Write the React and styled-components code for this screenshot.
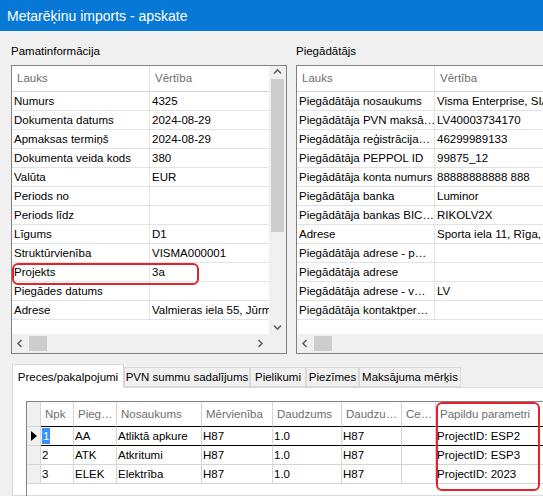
import styled, { createGlobalStyle } from "styled-components";

const GlobalStyle = createGlobalStyle`
  html, body {
    margin: 0;
    padding: 0;
  }
  body {
    background: #f0f0f0;
    font-family: "Liberation Sans", Arial, sans-serif;
    font-size: 11.5px;
    color: #000;
  }
`;

const basicInfo = [
    ["Numurs", "4325"],
    ["Dokumenta datums", "2024-08-29"],
    ["Apmaksas termiņš", "2024-08-29"],
    ["Dokumenta veida kods", "380"],
    ["Valūta", "EUR"],
    ["Periods no", ""],
    ["Periods līdz", ""],
    ["Līgums", "D1"],
    ["Struktūrvienība", "VISMA000001"],
    ["Projekts", "3a"],
    ["Piegādes datums", ""],
    ["Adrese", "Valmieras iela 55, Jūrm"],
];

const supplierInfo = [
    ["Piegādātāja nosaukums", "Visma Enterprise, SIA"],
    ["Piegādātāja PVN maksā…", "LV40003734170"],
    ["Piegādātāja reģistrācija…", "46299989133"],
    ["Piegādātāja PEPPOL ID", "99875_12"],
    ["Piegādātāja konta numurs", "88888888888 888"],
    ["Piegādātāja banka", "Luminor"],
    ["Piegādātāja bankas BIC…", "RIKOLV2X"],
    ["Adrese", "Sporta iela 11, Rīga,"],
    ["Piegādātāja adrese - p…", ""],
    ["Piegādātāja adrese", ""],
    ["Piegādātāja adrese - v…", "LV"],
    ["Piegādātāja kontaktper…", ""],
];

const tabs = [
    { label: "Preces/pakalpojumi", width: 112, active: true },
    { label: "PVN summu sadalījums", width: 126 },
    { label: "Pielikumi", width: 56 },
    { label: "Piezīmes", width: 53 },
    { label: "Maksājuma mērķis", width: 102 },
];

const itemCols = [
    { label: "", width: 14 },
    { label: "Npk", width: 33 },
    { label: "Pieg…", width: 43 },
    { label: "Nosaukums", width: 85 },
    { label: "Mērvienība", width: 71 },
    { label: "Daudzums", width: 69 },
    { label: "Daudzu…", width: 60 },
    { label: "Ce…", width: 34 },
    { label: "Papildu parametri", width: 120 },
];

const items = [
    ["1", "AA", "Atliktā apkure", "H87", "1.0", "H87", "", "ProjectID: ESP2"],
    ["2", "ATK", "Atkritumi", "H87", "1.0", "H87", "", "ProjectID: ESP3"],
    ["3", "ELEK", "Elektrība", "H87", "1.0", "H87", "", "ProjectID: 2023"],
];

const chevrons = {
    up: "M1 5.5 L4.5 2 L8 5.5",
    down: "M1 2.5 L4.5 6 L8 2.5",
    left: "M5.5 1 L2 4.5 L5.5 8",
    right: "M2.5 1 L6 4.5 L2.5 8",
};

function Chevron({ dir }) {
    return (
        <svg width="9" height="9" viewBox="0 0 9 9">
            <path d={chevrons[dir]} fill="none" stroke="#606060" strokeWidth="1.6" />
        </svg>
    );
}

function PropertyGrid({ rows, thumbLeft = 0, highlight }) {
    return (
        <Frame>
            <Cells>
                <PropRow $head>
                    <KeyCell $head>Lauks</KeyCell>
                    <ValueCell $head>Vērtība</ValueCell>
                </PropRow>
                {rows.map(([k, v]) => (
                    <PropRow key={k}>
                        <KeyCell>{k}</KeyCell>
                        <ValueCell>{v}</ValueCell>
                    </PropRow>
                ))}
            </Cells>
            <VBar>
                <VArrow><Chevron dir="up" /></VArrow>
                <VTrack><VThumb /></VTrack>
                <VArrow><Chevron dir="down" /></VArrow>
            </VBar>
            <HBar>
                <HArrow><Chevron dir="left" /></HArrow>
                <HTrack><HThumb $left={thumbLeft} /></HTrack>
                <HArrow><Chevron dir="right" /></HArrow>
            </HBar>
            <Corner />
            {highlight && <Marker $left={0} $top={197} $w={187} $h={22} />}
        </Frame>
    );
}

export default function App() {
    return (
        <Window>
            <GlobalStyle />
            <TitleBar>Metarēķinu imports - apskate</TitleBar>
            <TopArea>
                <Group>
                    <GroupLabel>Pamatinformācija</GroupLabel>
                    <PropertyGrid rows={basicInfo} highlight />
                </Group>
                <Group>
                    <GroupLabel>Piegādātājs</GroupLabel>
                    <PropertyGrid rows={supplierInfo} />
                </Group>
            </TopArea>
            <Lower>
                <TabStrip>
                    {tabs.map((t) => (
                        <Tab key={t.label} $w={t.width} $active={t.active}>{t.label}</Tab>
                    ))}
                </TabStrip>
                <Panel>
                    <ItemsGrid>
                        <ItemRow $head>
                            {itemCols.map((c, i) => (
                                <ItemCell key={i} $w={c.width} $head $rowHead={i === 0}>{c.label}</ItemCell>
                            ))}
                        </ItemRow>
                        {items.map((row, r) => (
                            <ItemRow key={row[0]}>
                                <ItemCell $w={itemCols[0].width} $rowHead>
                                    {r === 0 && (
                                        <svg width="6" height="10" viewBox="0 0 6 10">
                                            <path d="M0 0 L6 5 L0 10 Z" fill="#000" />
                                        </svg>
                                    )}
                                </ItemCell>
                                {row.map((v, c) => (
                                    <ItemCell key={c} $w={itemCols[c + 1].width} $active={r === 0}>
                                        {r === 0 && c === 0 ? <Selected>{v}</Selected> : v}
                                    </ItemCell>
                                ))}
                            </ItemRow>
                        ))}
                        <Marker $left={409} $top={0} $w={104} $h={89} />
                    </ItemsGrid>
                </Panel>
            </Lower>
        </Window>
    );
}

const Window = styled.div`
    width: 543px;
    height: 496px;
    overflow: hidden;
    display: flex;
    flex-direction: column;
    background: #f0f0f0;
`;

const TitleBar = styled.div`
    flex: none;
    height: 31px;
    display: flex;
    align-items: center;
    padding-left: 7px;
    background: #0878d6;
    color: #fff;
    font-size: 14px;
`;

const TopArea = styled.div`
    flex: none;
    display: flex;
    gap: 9px;
    padding: 13px 0 0 11px;
`;

const Group = styled.div`
    flex: none;
    display: flex;
    flex-direction: column;
    width: 276px;
`;

const GroupLabel = styled.div`
    height: 14px;
    line-height: 14px;
    margin-bottom: 7px;
`;

const Frame = styled.div`
    position: relative;
    box-sizing: border-box;
    width: 276px;
    height: 289px;
    border: 1px solid #828282;
    background: #fff;
    display: grid;
    grid-template-columns: 1fr 17px;
    grid-template-rows: 1fr 19px;
`;

const Cells = styled.div`
    overflow: hidden;
    min-width: 0;
`;

const PropRow = styled.div`
    display: flex;
    box-sizing: border-box;
    height: ${(p) => (p.$head ? 26 : 19)}px;
    border-bottom: 1px solid ${(p) => (p.$head ? "#d5d5d5" : "#e3e3e3")};
`;

const KeyCell = styled.div`
    flex: none;
    box-sizing: border-box;
    width: 138px;
    border-right: 1px solid #e3e3e3;
    padding-left: ${(p) => (p.$head ? 5 : 2)}px;
    line-height: ${(p) => (p.$head ? 25 : 18)}px;
    color: ${(p) => (p.$head ? "#6d6d6d" : "#000")};
    white-space: nowrap;
    overflow: hidden;
`;

const ValueCell = styled(KeyCell)`
    flex: 1;
    width: auto;
    border-right: 0;
`;

const VBar = styled.div`
    display: flex;
    flex-direction: column;
    background: #f0f0f0;
`;

const VArrow = styled.div`
    flex: none;
    height: 13px;
    display: flex;
    align-items: center;
    justify-content: center;
`;

const VTrack = styled.div`
    flex: 1;
    padding: 0 2px;
`;

const VThumb = styled.div`
    height: 153px;
    background: #cdcdcd;
`;

const HBar = styled.div`
    display: flex;
    background: #f0f0f0;
`;

const HArrow = styled.div`
    flex: none;
    width: 17px;
    display: flex;
    align-items: center;
    justify-content: center;
`;

const HTrack = styled.div`
    flex: 1;
    padding: 2px 0;
`;

const HThumb = styled.div`
    width: 18px;
    height: 100%;
    margin-left: ${(p) => p.$left}px;
    background: #cdcdcd;
`;

const Corner = styled.div`
    background: #f0f0f0;
`;

const Marker = styled.div`
    position: absolute;
    left: ${(p) => p.$left}px;
    top: ${(p) => p.$top}px;
    width: ${(p) => p.$w}px;
    height: ${(p) => p.$h}px;
    box-sizing: border-box;
    border: 2px solid #e3232b;
    border-radius: 6px;
    pointer-events: none;
`;

const Lower = styled.div`
    flex: 1;
    min-height: 0;
    display: flex;
    flex-direction: column;
    padding: 10px 0 0 12px;
`;

const TabStrip = styled.div`
    flex: none;
    display: flex;
    align-items: flex-end;
    height: 23px;
`;

const Tab = styled.div`
    flex: none;
    box-sizing: border-box;
    width: ${(p) => p.$w}px;
    height: ${(p) => (p.$active ? 24 : 20)}px;
    margin-bottom: ${(p) => (p.$active ? -1 : 0)}px;
    border: 1px solid #d9d9d9;
    border-bottom: ${(p) => (p.$active ? "0" : "1px solid #d9d9d9")};
    background: ${(p) => (p.$active ? "#fff" : "#f0f0f0")};
    display: flex;
    align-items: center;
    justify-content: center;
    white-space: nowrap;
    position: relative;
    z-index: ${(p) => (p.$active ? 1 : 0)};
`;

const Panel = styled.div`
    flex: 1;
    background: #fff;
    border: 1px solid #d9d9d9;
    border-right: 0;
    padding: 13px 0 0 13px;
`;

const ItemsGrid = styled.div`
    position: relative;
    border-left: 1px solid #828282;
    border-top: 1px solid #828282;
    height: 100%;
    display: flex;
    flex-direction: column;
`;

const ItemRow = styled.div`
    display: flex;
    flex: none;
    height: ${(p) => (p.$head ? 25 : 19)}px;
`;

const ItemCell = styled.div`
    flex: none;
    box-sizing: border-box;
    width: ${(p) => p.$w}px;
    border-right: 1px solid #d5d5d5;
    border-bottom: 1px solid ${(p) => (p.$head && !p.$rowHead ? "#000" : "#d5d5d5")};
    background: ${(p) => (p.$rowHead ? "#f0f0f0" : "#fff")};
    padding-left: ${(p) => (p.$head ? 4 : 1)}px;
    line-height: ${(p) => (p.$head ? 24 : 18)}px;
    color: ${(p) => (p.$head ? "#6d6d6d" : "#000")};
    white-space: nowrap;
    overflow: hidden;
    display: flex;
    align-items: center;
    ${(p) => p.$rowHead && !p.$head && "justify-content: center; padding-left: 0;"}
    ${(p) => p.$active && "border-bottom-color: #000;"}
`;

const Selected = styled.span`
    background: #3390ff;
    color: #fff;
    padding: 0 1px;
    line-height: 16px;
`;
